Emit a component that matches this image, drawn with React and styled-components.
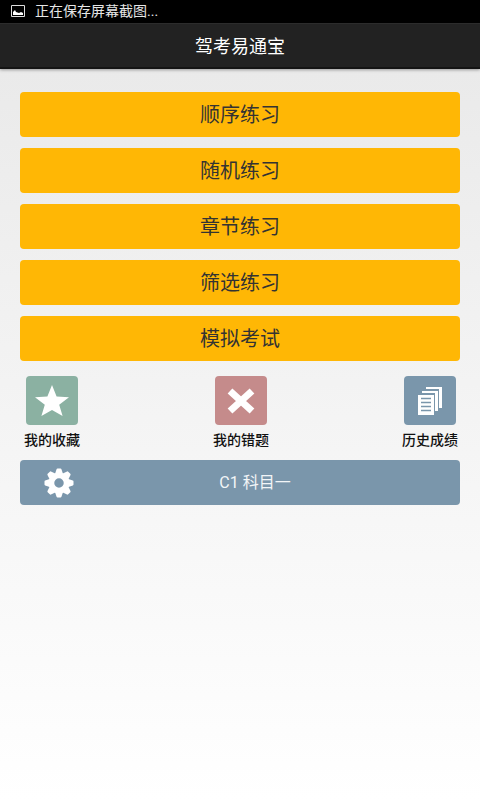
import React from 'react';
import styled, { createGlobalStyle } from 'styled-components';

const practiceModes = ['顺序练习', '随机练习', '章节练习', '筛选练习', '模拟考试'];

const StarIcon = () => (
  <svg width="34" height="32" viewBox="0 0 34 32" fill="#fff" aria-hidden="true">
    <path d="M17 0l4.6 11.6L34 12.2l-9.8 7.6L27.6 31 17 25 6.4 31l3.4-11.2L0 12.2l12.4-.6z" />
  </svg>
);

const CrossIcon = () => (
  <svg width="28" height="26" viewBox="0 0 28 26" aria-hidden="true">
    <path d="M3 3l22 20M25 3L3 23" stroke="#fff" strokeWidth="7" />
  </svg>
);

const PagesIcon = () => (
  <svg width="24" height="28" viewBox="0 0 24 28" fill="#fff" aria-hidden="true">
    <path d="M8 0h16v21h-3V2H8z" />
    <path d="M4 4h16v20h-3V6H4z" />
    <path d="M0 8h16v20H0z" />
    <path d="M3 11.5h10M3 15.5h10M3 19.5h10M3 23.5h10" stroke="#7a96ab" strokeWidth="1.3" />
  </svg>
);

const GearIcon = () => (
  <svg width="30" height="30" viewBox="-15 -15 30 30" aria-hidden="true">
    <g fill="#fff" stroke="#fff" strokeWidth="2" strokeLinejoin="round">
      {[0, 45, 90, 135, 180, 225, 270, 315].map((angle) => (
        <path key={angle} d="M-3-9l1.5-4.5h3l1.5 4.5z" transform={`rotate(${angle})`} />
      ))}
    </g>
    <circle r="7.5" fill="none" stroke="#fff" strokeWidth="5.5" />
  </svg>
);

const PictureIcon = () => (
  <svg width="14" height="12" viewBox="0 0 14 12" aria-hidden="true">
    <path d="M.5.5h13v11H.5z" fill="none" stroke="#ddd" />
    <path d="M2 10V7l2-2 1 2 3 1 2-1 2 1v2z" fill="#fff" />
  </svg>
);

const shortcuts = [
  { label: '我的收藏', color: '#8bb1a2', Icon: StarIcon },
  { label: '我的错题', color: '#c58b8b', Icon: CrossIcon },
  { label: '历史成绩', color: '#7a96ab', Icon: PagesIcon },
];

const App = () => (
  <Page>
    <GlobalStyle />
    <StatusBar>
      <PictureIcon />
      <span>正在保存屏幕截图...</span>
    </StatusBar>
    <Header>
      <Title>驾考易通宝</Title>
    </Header>
    <Content>
      <ModeList>
        {practiceModes.map((mode) => (
          <ModeButton key={mode}>{mode}</ModeButton>
        ))}
      </ModeList>
      <Shortcuts>
        {shortcuts.map(({ label, color, Icon }) => (
          <Shortcut key={label}>
            <Tile $color={color}>
              <Icon />
            </Tile>
            {label}
          </Shortcut>
        ))}
      </Shortcuts>
      <SubjectButton>
        <GearIcon />
        <SubjectName>C1 科目一</SubjectName>
      </SubjectButton>
    </Content>
  </Page>
);

const GlobalStyle = createGlobalStyle`
  * {
    box-sizing: border-box;
  }

  body {
    margin: 0;
    font-family: Roboto, 'Noto Sans CJK SC', sans-serif;
  }

  button {
    padding: 0;
    border: 0;
    font-family: inherit;
    cursor: pointer;
  }
`;

const Page = styled.div`
  min-height: 100vh;
  background: linear-gradient(#e8e8e8, #fff);
`;

const StatusBar = styled.div`
  display: flex;
  align-items: center;
  gap: 10px;
  height: 23px;
  padding: 0 11px 2px;
  background: #000;
  color: #e6e6e6;
  font-size: 14px;
  line-height: 20px;
`;

const Header = styled.header`
  display: flex;
  align-items: center;
  justify-content: center;
  height: 46px;
  background: #222;
  border-top: 1px solid #2c2c2c;
  border-bottom: 2px solid #141414;
  box-shadow: 0 1px 3px rgba(0, 0, 0, 0.35);
`;

const Title = styled.h1`
  margin: 0;
  padding-top: 2px;
  color: #fff;
  font-size: 18px;
  font-weight: 400;
  line-height: 24px;
`;

const Content = styled.main`
  display: flex;
  flex-direction: column;
  padding: 23px 20px;
`;

const ModeList = styled.div`
  display: flex;
  flex-direction: column;
  gap: 11px;
`;

const ModeButton = styled.button`
  height: 45px;
  border-radius: 4px;
  background: #ffb705;
  color: #333;
  font-size: 20px;
  line-height: 28px;
`;

const Shortcuts = styled.div`
  display: flex;
  justify-content: space-between;
  margin: 15px 0 10px;
  padding: 0 2px 0 4px;
`;

const Shortcut = styled.button`
  display: flex;
  flex-direction: column;
  align-items: center;
  gap: 5px;
  background: none;
  color: #111;
  font-size: 14px;
  font-weight: 500;
  line-height: 20px;
`;

const Tile = styled.span`
  display: flex;
  align-items: center;
  justify-content: center;
  width: 52px;
  height: 49px;
  border-radius: 4px;
  background: ${({ $color }) => $color};
`;

const SubjectButton = styled.button`
  display: grid;
  grid-template-columns: 30px 1fr 30px;
  align-items: center;
  height: 45px;
  padding: 0 24px;
  border-radius: 4px;
  background: #7a96ab;
  color: #f2f5f7;
`;

const SubjectName = styled.span`
  padding-left: 30px;
  font-size: 16px;
  line-height: 22px;
`;

export default App;
